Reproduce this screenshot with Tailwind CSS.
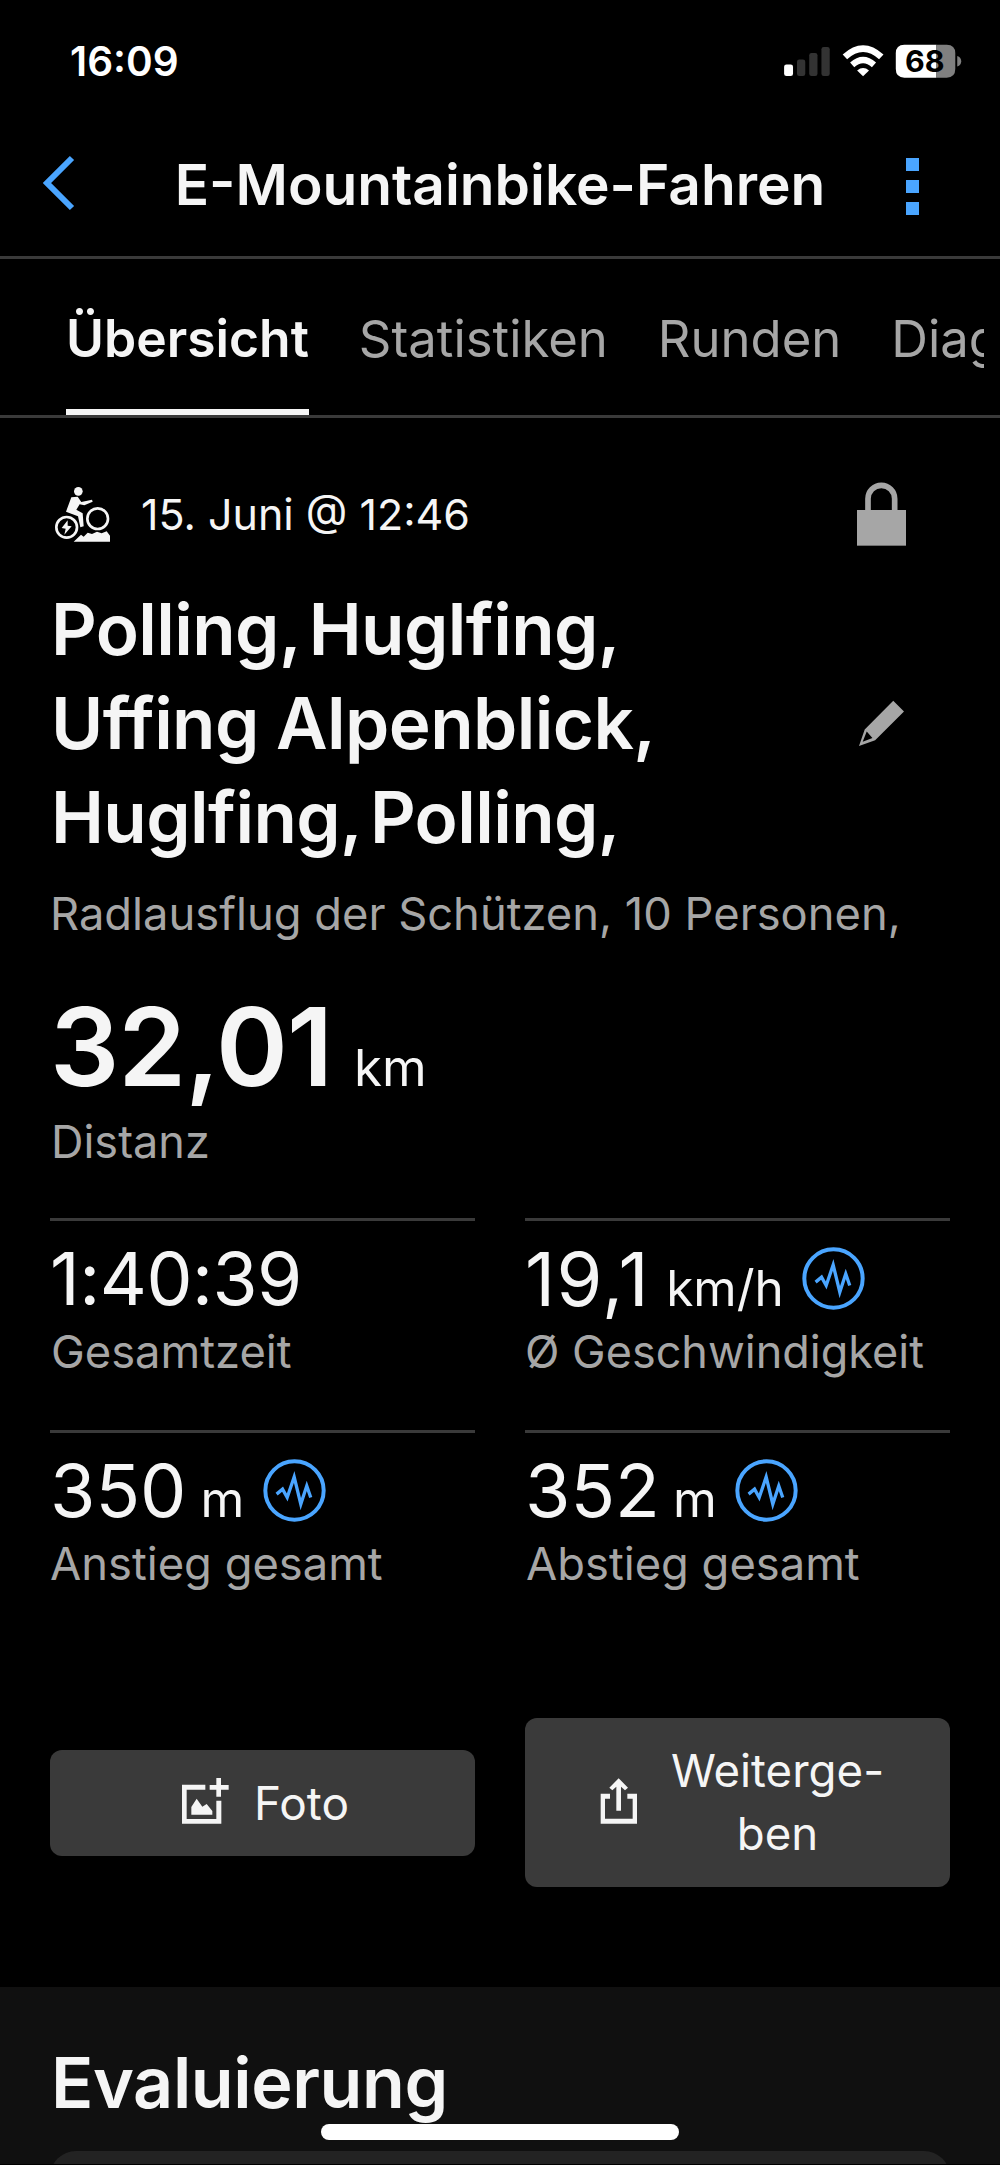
<!DOCTYPE html>
<html lang="de">
<head>
  <meta charset="UTF-8">
  <meta name="viewport" content="width=device-width, initial-scale=1.0">
  <script src="https://cdn.jsdelivr.net/npm/@tailwindcss/browser@4"></script>
  <title>E-Mountainbike-Fahren</title>
</head>
<body class="bg-black text-[#f5f5f5] font-['Inter',sans-serif] w-[1000px] h-[2165px] overflow-hidden relative">

  <!-- Status bar -->
  <div class="h-[114px] pt-[10px] pl-[70px] pr-[35px] flex items-center justify-between text-white">
    <span class="text-[40.5px] font-semibold">16:09</span>
    <svg class="w-[185px] h-[38px] -mt-[2px]" viewBox="60 65 555 115">
      <rect x="70" y="133" width="27" height="35" rx="7" fill="#fff"/>
      <rect x="109" y="118" width="25" height="50" rx="7" fill="#333"/>
      <rect x="146" y="98" width="25" height="70" rx="7" fill="#333"/>
      <rect x="183" y="80" width="25" height="88" rx="7" fill="#333"/>
      <g fill="none" stroke="#fff">
        <path d="M254 110Q309 60 364 110" stroke-width="20"/>
        <path d="M276 134Q309 105 342 134" stroke-width="19"/>
      </g>
      <path d="M291 151Q309 137 327 151L309 169Z" fill="#fff"/>
      <path d="M434 73H531V173H434Q408 173 408 147V99Q408 73 434 73Z" fill="#fff"/>
      <path d="M531 73H562Q588 73 588 99V147Q588 173 562 173H531Z" fill="#808080"/>
      <path d="M594 107Q606 111 606 123T594 139Z" fill="#808080"/>
      <text x="496" y="156" text-anchor="middle" font-size="92" font-weight="700" fill="#000">68</text>
    </svg>
  </div>

  <!-- Header -->
  <header class="h-[145px] border-b-3 border-[#3a3a3a] pl-[42px] pr-[81px] flex items-center justify-between">
    <svg class="w-[33px] h-[56px] -mt-1" viewBox="0 0 33 56" fill="none" stroke="#4aa5ff" stroke-width="6">
      <path d="M30 3L5 28L30 53"/>
    </svg>
    <h1 class="text-[56.8px] font-semibold leading-none ml-[19px]">E-Mountainbike-Fahren</h1>
    <div class="flex flex-col gap-[9px] mt-[3px]">
      <i class="size-[13px] bg-[#4aa5ff]"></i>
      <i class="size-[13px] bg-[#4aa5ff]"></i>
      <i class="size-[13px] bg-[#4aa5ff]"></i>
    </div>
  </header>

  <!-- Tabs -->
  <nav class="border-b-3 border-[#3a3a3a]">
    <div class="h-[156px] ml-[66px] mr-4 flex gap-[50px] overflow-hidden text-[50.8px] text-[#a6a6a6]">
      <a class="flex items-center pt-[10px] border-b-6 border-[#f5f5f5] text-[51.6px] font-semibold text-[#f5f5f5]">Übersicht</a>
      <a class="flex items-center pt-1">Statistiken</a>
      <a class="flex items-center pt-1">Runden</a>
      <a class="flex items-center pt-1">Diagramme</a>
    </div>
  </nav>

  <!-- Activity -->
  <main class="px-[50px] pt-16">
    <div class="h-16 pl-[5px] pr-[44px] flex items-center">
      <svg class="size-14" viewBox="75 50 168 168">
        <circle cx="145" cy="66" r="13" fill="#f5f5f5"/>
        <path d="M124 84L143 82L154 98L186 91L188 97L163 108L149 105L139 121L158 132L161 171L151 174L144 141L108 127Z" fill="#f5f5f5"/>
        <g fill="none" stroke="#f5f5f5" stroke-width="8">
          <circle cx="110" cy="174" r="31"/>
          <circle cx="203" cy="148" r="31"/>
        </g>
        <path d="M113 153L95 176L107 178L103 196L125 171L113 169Z" fill="#f5f5f5"/>
        <path d="M131 217L153 196L161 202L173 190L186 194L201 187L215 192L230 186L240 199V217Z" fill="#f5f5f5"/>
      </svg>
      <span class="text-[43px] ml-[30px]">15. Juni @ 12:46</span>
      <svg class="w-[49px] h-16 ml-auto" viewBox="171 67 147 192">
        <rect x="171" y="151" width="147" height="107" fill="#a6a6a6"/>
        <path d="M204 155V117A40 40 0 0 1 284 117V155" fill="none" stroke="#a6a6a6" stroke-width="17"/>
      </svg>
    </div>

    <div class="mt-[37px] pl-px pr-[45px] flex items-center justify-between">
      <h2 class="text-[71px] leading-[93.8px] font-semibold tracking-[-0.6px]">
        <span class="[word-spacing:-8px]">Polling, Huglfing,</span><br>Uffing Alpenblick,<br><span class="[word-spacing:-8px]">Huglfing, Polling,</span>
      </h2>
      <svg class="size-[47px]" viewBox="174 715 140 140">
        <path d="M279 717L311 749L225 835L177 852L194 803ZM200 809L188 839L217 828Z" fill="#a6a6a6" fill-rule="evenodd"/>
      </svg>
    </div>
    <p class="mt-[19px] text-[45.3px] leading-[62px] text-[#a6a6a6] whitespace-nowrap">Radlausflug der Schützen, 10 Personen,</p>

    <div class="mt-[46px] flex items-baseline">
      <span class="text-[109px] leading-[110px] font-semibold tracking-[-1px]">32,01</span>
      <span class="text-[51px] leading-none ml-[22px]">km</span>
    </div>
    <p class="mt-[10px] pl-px text-[45px] leading-[62px] text-[#a6a6a6]">Distanz</p>

    <!-- Stats -->
    <div class="mt-[45px] grid grid-cols-2 gap-x-[50px] auto-rows-[211.5px]">
      <div class="border-t-3 border-[#3a3a3a] pt-[21px]">
        <div class="h-[74px] flex items-baseline">
          <span class="text-[73px] leading-[74px] tracking-[-0.5px]">1:40:39</span>
        </div>
        <p class="mt-[5px] pl-px text-[45.3px] leading-[62px] text-[#a6a6a6]">Gesamtzeit</p>
      </div>
      <div class="border-t-3 border-[#3a3a3a] pt-[21px]">
        <div class="h-[74px] flex items-baseline">
          <span class="text-[74px] leading-[74px] tracking-[1.5px]">19,1</span>
          <span class="text-[49.5px] leading-none ml-4">km/h</span>
          <svg class="size-[63px] self-start mt-[5px] ml-[18px]" viewBox="905 143 190 190" fill="none" stroke="#4aa5ff">
            <circle cx="1000" cy="238" r="88" stroke-width="12"/>
            <path d="M946 249L964 234L978 259L999 197L1019 279L1037 224L1049 259" stroke-width="10"/>
          </svg>
        </div>
        <p class="mt-[5px] text-[45px] leading-[62px] text-[#a6a6a6] whitespace-nowrap">Ø Geschwindigkeit</p>
      </div>
      <div class="border-t-3 border-[#3a3a3a] pt-[21px]">
        <div class="h-[74px] flex items-baseline">
          <span class="text-[73.5px] leading-[74px]">350</span>
          <span class="text-[50px] leading-none ml-[14px]">m</span>
          <svg class="size-[63px] self-start mt-[5px] ml-[19px]" viewBox="905 143 190 190" fill="none" stroke="#4aa5ff">
            <circle cx="1000" cy="238" r="88" stroke-width="12"/>
            <path d="M946 249L964 234L978 259L999 197L1019 279L1037 224L1049 259" stroke-width="10"/>
          </svg>
        </div>
        <p class="mt-[5px] text-[45.3px] leading-[62px] text-[#a6a6a6]">Anstieg gesamt</p>
      </div>
      <div class="border-t-3 border-[#3a3a3a] pt-[21px]">
        <div class="h-[74px] flex items-baseline">
          <span class="text-[73.5px] leading-[74px]">352</span>
          <span class="text-[50px] leading-none ml-[13px]">m</span>
          <svg class="size-[63px] self-start mt-[5px] ml-[18px]" viewBox="905 143 190 190" fill="none" stroke="#4aa5ff">
            <circle cx="1000" cy="238" r="88" stroke-width="12"/>
            <path d="M946 249L964 234L978 259L999 197L1019 279L1037 224L1049 259" stroke-width="10"/>
          </svg>
        </div>
        <p class="mt-[5px] pl-px text-[45.3px] leading-[62px] text-[#a6a6a6]">Abstieg gesamt</p>
      </div>
    </div>

    <!-- Actions -->
    <div class="mt-[77px] grid grid-cols-2 gap-[50px] items-center text-[45.6px] leading-[62.5px]">
      <button class="h-[106px] rounded-xl bg-[#3a3a3a] pl-[3px] flex items-center justify-center gap-[25px]">
        <svg class="size-[50px]" viewBox="54 55 150 150" fill="#f5f5f5">
          <path d="M63 75H133V90H77V178H166V123H181V192H63Z"/>
          <path d="M166 55H180V76H203V90H180V111H166V90H146V76H166Z"/>
          <path d="M91 165V142L107 117L124 141L137 133L154 154V165Z"/>
        </svg>
        <span class="text-[46px]">Foto</span>
      </button>
      <button class="h-[169px] rounded-xl bg-[#3a3a3a] pl-2 flex items-center justify-center gap-8">
        <svg class="w-10 h-[50px]" viewBox="57 55 120 150" fill="#f5f5f5">
          <path d="M62 102H90V117H75V177H158V117H142V102H171V192H62Z"/>
          <path d="M116 56L144 84L135 92L123 81V153H109V81L97 92L88 84Z"/>
        </svg>
        <span class="text-center">Weiterge-<br>ben</span>
      </button>
    </div>
  </main>

  <!-- Evaluation -->
  <section class="mt-[100px] h-[177px] bg-[#101010] px-[50px] pt-[49px] overflow-hidden">
    <h2 class="pl-px text-[70px] leading-[94px] font-semibold tracking-[-0.4px]">Evaluierung</h2>
    <div class="mt-[21px] h-20 rounded-[26px] bg-[#232323]"></div>
  </section>

  <!-- Home indicator -->
  <div class="absolute left-[321px] top-[2124px] w-[358px] h-4 rounded-full bg-white"></div>
</body>
</html>
